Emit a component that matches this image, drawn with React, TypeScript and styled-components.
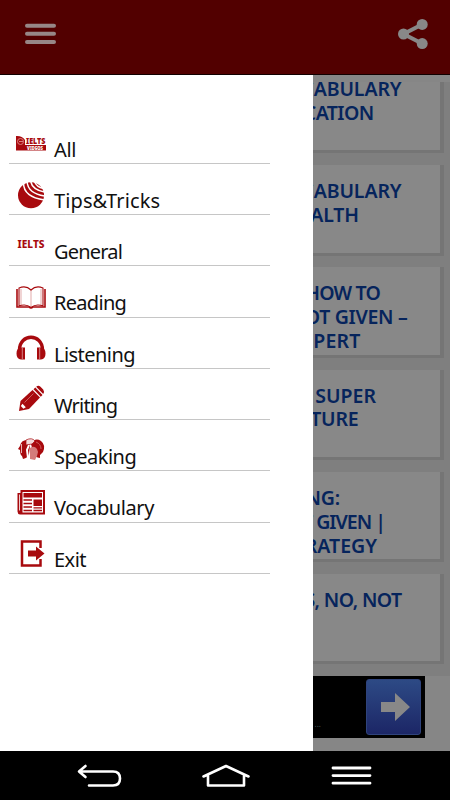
import React from "react";
import styled, { createGlobalStyle } from "styled-components";

const Global = createGlobalStyle`
  *{box-sizing:border-box}
  body{margin:0;background:#000;font-family:"Noto Sans","Open Sans",sans-serif}
  svg{display:block}
`;
const Screen = styled.div`
  width:450px;height:800px;display:flex;flex-direction:column;overflow:hidden;
`;
const Header = styled.header`
  height:75px;flex:none;background:#520000;border-bottom:1px solid #120000;
  display:flex;justify-content:space-between;padding:18px 21px 0 24px;
`;
const Main = styled.main`
  position:relative;height:676px;flex:none;background:#868686;overflow:hidden;
`;
const List = styled.div`
  margin-top:7px;height:594px;overflow:hidden;background:#7f7f7f;
  display:flex;flex-direction:column;
`;
const Card = styled.article<{ $first?: boolean }>`
  flex:none;width:444px;height:90.4px;margin:${p => (p.$first ? "-19px" : "0")} 0 11.8px;
  background:#888;border-right:4px solid #757575;border-bottom:3px solid #757575;
  padding-top:14px;
`;
const Line = styled.div<{ $end: number; $track: number }>`
  width:${p => p.$end}px;height:23.9px;line-height:23.9px;text-align:right;white-space:nowrap;
  font-size:19.5px;font-weight:600;color:#06245c;letter-spacing:${p => p.$track}px;
`;
const Ad = styled.div`
  width:425px;height:62px;background:#000;display:flex;justify-content:flex-end;align-items:center;
  padding-right:4px;
`;
const AdDots = styled.span`
  color:#3f5555;font-size:8px;line-height:8px;margin:34px 45px 0 0;
`;
const AdButton = styled.div`
  width:55px;height:56px;border-radius:3px;border:1px solid #2f437c;
  background:linear-gradient(#2d4a85,#1c2666);display:flex;align-items:center;justify-content:center;
  padding-left:3px;
`;
const Drawer = styled.nav`
  position:absolute;left:0;top:0;width:312.5px;height:100%;background:#fff;padding:37.5px 0 0 9px;
`;
const Row = styled.div`
  width:261px;height:51.25px;border-bottom:1px solid #c6c6c6;display:flex;
`;
const IconBox = styled.div`
  width:45px;height:100%;flex:none;padding:14px 0 0 6px;
`;
const Label = styled.span<{ $track: number }>`
  font-size:20px;line-height:26px;padding-top:24px;color:#111;letter-spacing:${p => p.$track}px;white-space:nowrap;
`;
const Nav = styled.footer`
  height:49px;flex:none;background:#000;display:flex;align-items:center;padding:0 78px 0 76px;
  justify-content:space-between;
`;

const RED = "#a80a0e";
const Ico = ({ children }: { children: React.ReactNode }) => (
  <svg width="34" height="34" viewBox="0 0 34 34" fill={RED}>{children}</svg>
);

const icons = {
  all: (
    <Ico>
      <path d="M1 9q6-.5 9 4v5h21v5.500H1z" />
      <circle cx="5.500" cy="14.500" r="3" fill="none" stroke="#d98080" />
      <path d="M4 14.500h4" stroke="#d98080" />
      <text x="11" y="17.300" fontSize="8" fontWeight="900" textLength="19.500" lengthAdjust="spacingAndGlyphs">IELTS</text>
      <text x="12" y="22.700" fontSize="5.500" fontWeight="900" fill="#fff" textLength="16" lengthAdjust="spacingAndGlyphs">VIDEOS</text>
    </Ico>
  ),
  tips: (
    <Ico>
      <circle cx="16" cy="17.200" r="13" />
      <g fill="none" stroke="#fff" strokeWidth="1.500">
        <path d="M8.500 5q0 14 21 17" /><path d="M12 3.500q1 12 17.500 14.500" />
        <path d="M15.500 3q2 9 14 11" /><path d="M19.500 3.500q2 5.500 9 7" />
      </g>
    </Ico>
  ),
  general: (
    <Ico><text x="2.500" y="19.300" fontSize="10" fontWeight="800" textLength="27" lengthAdjust="spacingAndGlyphs">IELTS</text></Ico>
  ),
  reading: (
    <Ico>
      <g fill="none" stroke={RED}>
        <path d="M16 10Q11 5 4 8v18q7-2.500 12 1.500Q21 23.500 28 26V8Q21 5 16 10z" strokeWidth="1.100" />
        <path d="M16 10v17M6 9v16M26 9v16" strokeWidth=".6" opacity=".6" />
        <path d="M2 9v18h12q2 2 4 0h12V9" strokeWidth="1.600" />
      </g>
    </Ico>
  ),
  listening: (
    <Ico>
      <path d="M4.500 18C4.500 1 27.500 1 27.500 18" fill="none" stroke={RED} strokeWidth="3.400" />
      <path d="M6 15.500h4v12H6q-4.500-.5-4.500-6T6 15.500zM26 15.500h-4v12H26q4.500-.5 4.500-6T26 15.500z" />
      <path d="M7.300 16v11M24.700 16v11" stroke="#e9b5b5" strokeWidth=".7" />
    </Ico>
  ),
  writing: (
    <Ico>
      <path d="M4 28l1.500-10L17.500 7l7.500 7.500L14 26z" />
      <path d="M18.500 6.200L20.300 4.500l7.200 7.500L25.800 13.700zM21.200 3.800q2-1.800 4-.3l3 3q1.500 2 0 4.500z" />
      <path d="M9.500 19.500l9-9" stroke="#d98585" strokeWidth=".7" />
      <path d="M5.800 23l1.700-2.200 3.300 3.400-2.400 1.600z" fill="#fff" />
    </Ico>
  ),
  speaking: (
    <Ico>
      <path d="M12 6Q6 6 5 12l-2 3 2 1q0 5 2 6l1 3q5-1 6-5l1-8z" />
      <path d="M16 10Q20 3 26 7q5 4 2 11l-3 3v3q-5-1-6-3z" />
      <path d="M15 14q4-3 7 1l1 3-1 4-2 4-5-1z" fill="#d47b7b" />
      <path d="M11 6q6-3 9 1l-3 3-6 1z" fill="#f2dada" stroke={RED} strokeWidth=".7" />
      <path d="M14 11l-2 5 1 8" fill="none" stroke="#fff" strokeWidth="2" />
      <path d="M6.500 10v9" stroke="#eec5c5" strokeWidth=".9" />
      <path d="M21 8q5 2 5 7" fill="none" stroke="#c95c5c" />
    </Ico>
  ),
  vocabulary: (
    <Ico>
      <path d="M5.500 5h24.500v24.500H5q-2.500-.5-2.500-3V8h3z" />
      <path d="M7.500 7h20.500v20.500H7.500z" fill="#fff" />
      <path d="M4.500 9.500v16" stroke="#fff" strokeWidth=".8" />
      <path d="M8.500 8h18.500v4.500H8.500zM18.500 14.500H27v6.500h-8.500z" />
      <path d="M8.500 15h8.500M8.500 18.500h8.500M8.500 22h8.500M8.500 25.500h8.500M18.500 22.800H27M18.500 25.500H27" stroke={RED} strokeWidth="1.300" />
    </Ico>
  ),
  exit: (
    <Ico>
      <path d="M25.500 11V4.500H7v24h18.500v-6.500" fill="none" stroke={RED} strokeWidth="2.500" />
      <path d="M13 13.500h8V9.500l8.500 7-8.500 7v-4h-8z" />
    </Ico>
  ),
};

const menu: { icon: keyof typeof icons; label: string; track: number }[] = [
  { icon: "all", label: "All", track: -0.3 },
  { icon: "tips", label: "Tips&Tricks", track: 0.1 },
  { icon: "general", label: "General", track: -0.8 },
  { icon: "reading", label: "Reading", track: -0.7 },
  { icon: "listening", label: "Listening", track: -0.55 },
  { icon: "writing", label: "Writing", track: -0.8 },
  { icon: "speaking", label: "Speaking", track: -0.5 },
  { icon: "vocabulary", label: "Vocabulary", track: -0.4 },
  { icon: "exit", label: "Exit", track: -0.5 },
];

const cards: [string, number, number][][] = [
  [["VOCABULARY", 401.5, -0.1], ["EDUCATION", 373.5, -0.6]],
  [["VOCABULARY", 401.5, -0.1], ["HEALTH", 359, -0.1]],
  [["HOW TO", 380, -0.8], ["NOT GIVEN –", 407.5, -0.3], ["EXPERT", 360.5, 0.2]],
  [["SUPER", 376, 0], ["LECTURE", 358.5, -0.2]],
  [["READING:", 340, -0.2], ["NOT GIVEN |", 385, -1], ["STRATEGY", 377, 0]],
  [["YES, NO, NOT", 401.5, -0.6]],
];

export default function App() {
  return (
    <Screen>
      <Global />
      <Header>
        <svg width="34" height="32" viewBox="0 0 34 32">
          <path d="M3 7.700h27M3 15.800h27M3 23.900h27" stroke="#978787" strokeWidth="4" strokeLinecap="round" />
        </svg>
        <svg width="32" height="32" viewBox="0 0 32 32" fill="#888" stroke="#888">
          <path d="M25 6.500L6.500 16 25 25.500" fill="none" strokeWidth="4" />
          <g stroke="none"><circle cx="25.200" cy="6.400" r="5.500" /><circle cx="6.500" cy="16" r="5.500" /><circle cx="25.200" cy="25.600" r="5.500" /></g>
        </svg>
      </Header>
      <Main>
        <List>
          {cards.map((lines, i) => (
            <Card key={i} $first={i === 0}>
              {lines.map(([text, end, track]) => <Line key={text} $end={end} $track={track}>{text}</Line>)}
            </Card>
          ))}
        </List>
        <Ad>
          <AdDots>...</AdDots>
          <AdButton>
            <svg width="31" height="30" viewBox="0 0 31 30"><path d="M1 10h14V1l15 14-15 14V20H1z" fill="#888" /></svg>
          </AdButton>
        </Ad>
        <Drawer>
          {menu.map(m => (
            <Row key={m.label}>
              <IconBox>{icons[m.icon]}</IconBox>
              <Label $track={m.track}>{m.label}</Label>
            </Row>
          ))}
        </Drawer>
      </Main>
      <Nav>
        <svg width="46" height="24" viewBox="0 0 46 24" fill="none" stroke="#fff" strokeWidth="2.600" strokeLinecap="round" strokeLinejoin="round">
          <path d="M9.500 2L3 7.500 9.500 13M4 7.500h33q7 0 7 7t-7 7H13" />
        </svg>
        <svg width="50" height="24" viewBox="2 0 50 24" fill="none" stroke="#fff" strokeWidth="2.600" strokeLinecap="round" strokeLinejoin="round">
          <path d="M3.500 12.500L26 2l22.500 10.500M8 11.500v10h36v-10" />
        </svg>
        <svg width="41" height="24" viewBox="0 0 41 24" stroke="#fff" strokeWidth="2.800" strokeLinecap="round">
          <path d="M2 4h37M2 11.600h37M2 19.200h37" />
        </svg>
      </Nav>
    </Screen>
  );
}
